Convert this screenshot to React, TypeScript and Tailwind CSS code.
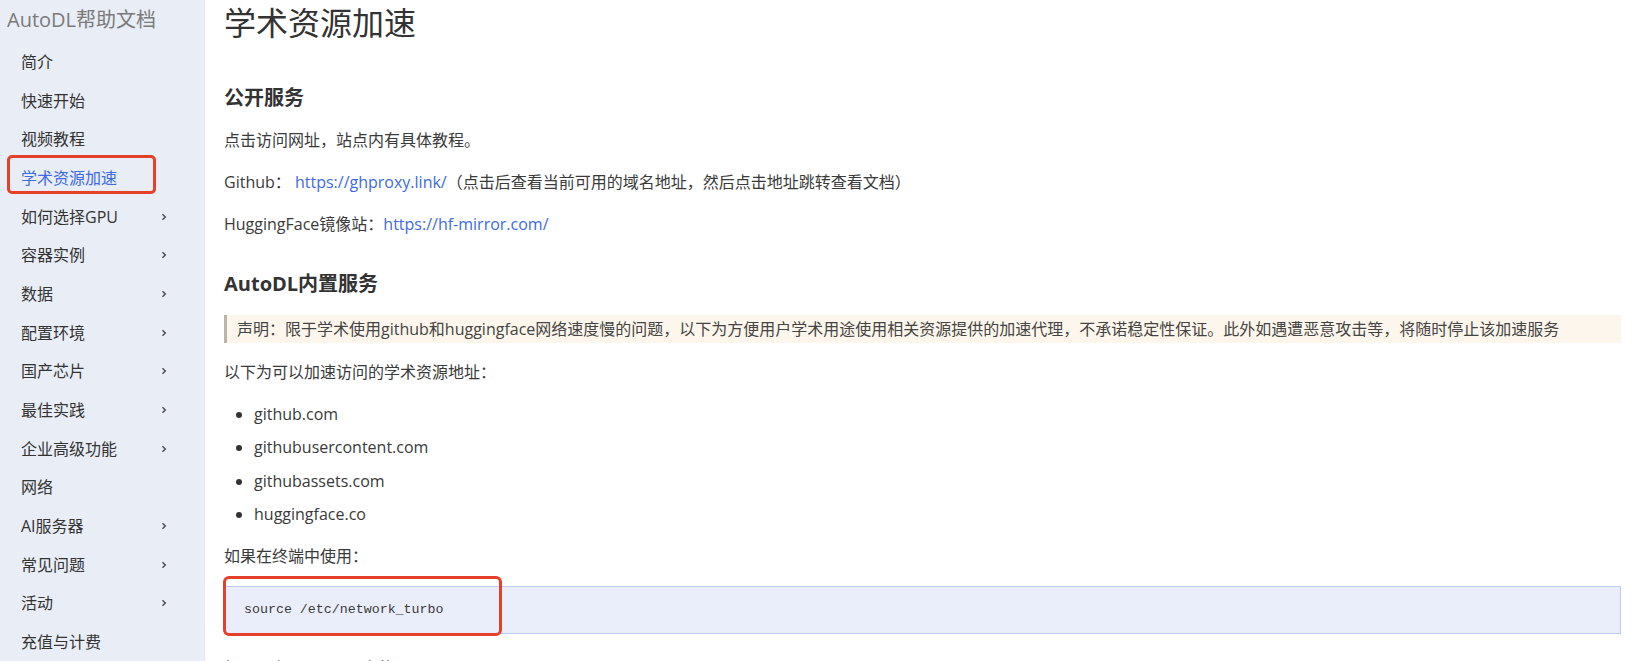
const navItems = [
  { label: "简介", sub: false },
  { label: "快速开始", sub: false },
  { label: "视频教程", sub: false },
  { label: "学术资源加速", sub: false, active: true },
  { label: "如何选择GPU", sub: true },
  { label: "容器实例", sub: true },
  { label: "数据", sub: true },
  { label: "配置环境", sub: true },
  { label: "国产芯片", sub: true },
  { label: "最佳实践", sub: true },
  { label: "企业高级功能", sub: true },
  { label: "网络", sub: false },
  { label: "AI服务器", sub: true },
  { label: "常见问题", sub: true },
  { label: "活动", sub: true },
  { label: "充值与计费", sub: false },
];

const domains = ["github.com", "githubusercontent.com", "githubassets.com", "huggingface.co"];

const Chevron = () => (
  <svg width="6" height="8" viewBox="0 0 6 8" fill="none">
    <path d="M1.5 1.2 4.3 4 1.5 6.8" stroke="#4a4a4a" strokeWidth="1.4" />
  </svg>
);

const Sidebar = () => {
  return (
    <aside className="w-[205px] shrink-0 bg-[#e9edf5]">
      <div className="pl-[7px] pt-[6px] text-[20px] leading-[28px] text-[#7a7a7a]">AutoDL帮助文档</div>
      <ul className="mt-[8.7px]">
        {navItems.map((item) => (
          <li key={item.label} className="relative flex h-[38.67px] items-center pl-[21px]">
            {item.active && (
              <span className="absolute left-[7px] top-[-3.6px] h-[39px] w-[149px] rounded-[5px] border-[3px] border-[#e5402a]" />
            )}
            <span
              className={`w-[140px] text-[16px] leading-[24px] ${item.active ? "text-[#3d6be6]" : "text-[#333]"}`}
            >
              {item.label}
            </span>
            {item.sub && <Chevron />}
          </li>
        ))}
      </ul>
    </aside>
  );
};

export default function App() {
  return (
    <div className="flex h-screen overflow-hidden bg-white font-['Open_Sans','Noto_Sans_CJK_SC',sans-serif]">
      <Sidebar />
      <main className="flex-1 pl-[19px] pr-[17px] text-[16px] leading-[24px] text-[#3a3a3a]">
        <h1 className="text-[32px] leading-[46px] font-normal text-[#333]">学术资源加速</h1>
        <h2 className="mt-[38px] text-[20px] leading-[28px] font-bold text-[#333]">公开服务</h2>
        <p className="mt-[16px]">点击访问网址，站点内有具体教程。</p>
        <p className="mt-[18px]">
          Github：&nbsp;<a className="text-[#3d6be6]">https://ghproxy.link/</a>（点击后查看当前可用的域名地址，然后点击地址跳转查看文档）
        </p>
        <p className="mt-[18px]">
          HuggingFace镜像站：<a className="text-[#3d6be6]">https://hf-mirror.com/</a>
        </p>
        <h2 className="mt-[34px] text-[20px] leading-[28px] font-bold text-[#333]">AutoDL内置服务</h2>
        <blockquote className="mt-[17px] border-l-[3px] border-[#bbb4aa] bg-[#fdf6ec] py-[2px] pl-[10px] text-[#444]">
          声明：限于学术使用github和huggingface网络速度慢的问题，以下为方便用户学术用途使用相关资源提供的加速代理，不承诺稳定性保证。此外如遇遭恶意攻击等，将随时停止该加速服务
        </blockquote>
        <p className="mt-[17px]">以下为可以加速访问的学术资源地址：</p>
        <ul className="mt-[14px] pl-[30px]">
          {domains.map((d) => (
            <li key={d} className="list-disc leading-[33.4px] marker:text-[#333]">
              {d}
            </li>
          ))}
        </ul>
        <p className="mt-[12px]">如果在终端中使用：</p>
        <div className="relative mt-[18px]">
          <pre className="h-[48px] border border-[#bccaf5] bg-[#eaeefb] pl-[19px] font-['Liberation_Mono',monospace] text-[13.3px] leading-[46px] text-[#3a3a3a]">
            source /etc/network_turbo
          </pre>
          <span className="absolute left-[-1.3px] top-[-9.3px] h-[60px] w-[279px] rounded-[6px] border-[3px] border-[#e5402a]" />
        </div>
        <p className="mt-[22px]">如果是在Notebook中使用：</p>
      </main>
    </div>
  );
}
